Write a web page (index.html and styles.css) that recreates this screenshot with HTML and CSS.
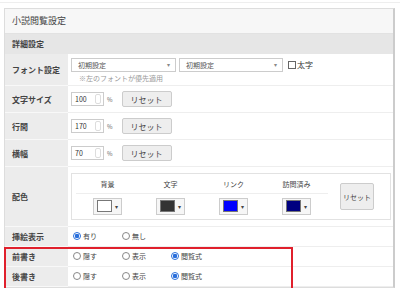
FILE: index.html
```html
<!DOCTYPE html>
<html lang="ja">
<head>
  <meta charset="UTF-8" />
  <title>小説閲覧設定</title>
  <link rel="stylesheet" href="styles.css">
</head>
<body>
  <div class="topline"></div>
  <div class="panel">
    <div class="panel-title">小説閲覧設定</div>
    <div class="section-title">詳細設定</div>
    <table class="settings">
      <tr class="row-font">
        <th>フォント設定</th>
        <td>
          <div class="font-line">
            <span class="select sel1">初期設定<i>▾</i></span>
            <span class="select sel2">初期設定<i>▾</i></span>
            <span class="check"><b></b>太字</span>
          </div>
          <div class="note">※左のフォントが優先適用</div>
        </td>
      </tr>
      <tr class="row-num">
        <th>文字サイズ</th>
        <td><span class="num">100<i></i></span><span class="unit">%</span><span class="btn">リセット</span></td>
      </tr>
      <tr class="row-num">
        <th>行間</th>
        <td><span class="num">170<i></i></span><span class="unit">%</span><span class="btn">リセット</span></td>
      </tr>
      <tr class="row-num">
        <th>横幅</th>
        <td><span class="num">70<i></i></span><span class="unit">%</span><span class="btn">リセット</span></td>
      </tr>
      <tr class="row-color">
        <th>配色</th>
        <td>
          <div class="colors">
            <div class="color-grid">
              <div class="ch">背景</div>
              <div class="ch">文字</div>
              <div class="ch">リンク</div>
              <div class="ch">訪問済み</div>
              <div class="cc"><span class="swatch"><b class="c-bg"></b><i>▾</i></span></div>
              <div class="cc"><span class="swatch"><b class="c-text"></b><i>▾</i></span></div>
              <div class="cc"><span class="swatch"><b class="c-link"></b><i>▾</i></span></div>
              <div class="cc"><span class="swatch"><b class="c-visited"></b><i>▾</i></span></div>
            </div>
            <span class="btn btn-tall">リセット</span>
          </div>
        </td>
      </tr>
      <tr class="row-radio">
        <th>挿絵表示</th>
        <td><span class="radio on">有り</span><span class="radio">無し</span></td>
      </tr>
      <tr class="row-radio mark">
        <th>前書き</th>
        <td><span class="radio">隠す</span><span class="radio">表示</span><span class="radio on">閲覧式</span></td>
      </tr>
      <tr class="row-radio mark">
        <th>後書き</th>
        <td><span class="radio">隠す</span><span class="radio">表示</span><span class="radio on">閲覧式</span></td>
      </tr>
    </table>
    <div class="highlight"></div>
  </div>
</body>
</html>
```
FILE: styles.css
```css
body {
  margin: 0;
  font-family: "Noto Sans CJK JP", "Noto Sans", sans-serif;
  font-size: 8px;
  color: #333;
  background: #fff;
  width: 400px;
  height: 288px;
  overflow: hidden;
}
.topline {
  height: 2px;
  border-bottom: 1px solid #eee;
  margin-bottom: 5px;
}
.panel {
  position: relative;
  margin-left: 4px;
  width: 388px;
  border: 1px solid #ddd;
  border-right: 2px solid #ccc;
}
.panel-title {
  height: 24px;
  line-height: 24px;
  padding-left: 7px;
  background: #f7f7f7;
  border-bottom: 1px solid #e2e2e2;
  font-size: 9px;
  color: #444;
}
.section-title {
  height: 20px;
  line-height: 20px;
  padding-left: 7px;
  background: #e6e6e6;
  font-weight: bold;
  color: #444;
}
.settings {
  width: 100%;
  border-collapse: collapse;
}
.settings th {
  width: 56px;
  padding: 0 0 0 7px;
  background: #ececec;
  text-align: left;
  font-weight: bold;
  color: #444;
  border-bottom: 1px solid #f8f8f8;
}
.settings td {
  padding: 0 0 0 3px;
  border-bottom: 1px solid #eee;
}
.row-font th, .row-font td { height: 31px; }
.row-num th, .row-num td { height: 26px; }
.row-color th, .row-color td { height: 59px; }
.row-radio th, .row-radio td { height: 19px; }

.font-line {
  display: flex;
  align-items: center;
  gap: 3px;
  margin-top: 1px;
}
.select {
  display: flex;
  align-items: center;
  justify-content: space-between;
  height: 12px;
  padding: 0 5px 0 6px;
  border: 1px solid #ccc;
  background: #fff;
  color: #555;
  font-size: 7px;
}
.select i { font-style: normal; color: #888; font-size: 6px; }
.sel1 { width: 92px; }
.sel2 { width: 91px; }
.check {
  display: flex;
  align-items: center;
  gap: 1px;
  margin-left: 2px;
}
.check b {
  width: 6px;
  height: 6px;
  border: 1px solid #666;
  background: #fff;
}
.note {
  margin: 1px 0 0 8px;
  color: #999;
  font-size: 7px;
}

.row-num td > span { vertical-align: middle; }
.num {
  display: inline-flex;
  align-items: center;
  justify-content: space-between;
  width: 26px;
  height: 12px;
  padding: 0 2px 0 3px;
  border: 1px solid #ccc;
  background: #fff;
  font-size: 7px;
  color: #333;
}
.num i {
  width: 4px;
  height: 8px;
  border: 1px solid #ddd;
  border-radius: 2px;
}
.unit {
  display: inline-block;
  margin-left: 3px;
  font-size: 6px;
  color: #666;
}
.btn {
  display: inline-flex;
  align-items: center;
  justify-content: center;
  width: 48px;
  height: 14px;
  margin-left: 9px;
  border: 1px solid #ccc;
  border-radius: 2px;
  background: #eee;
  color: #444;
  font-size: 8px;
}

.colors {
  display: flex;
  align-items: center;
  width: 318px;
  height: 45px;
  border: 1px solid #e2e2e2;
}
.color-grid {
  display: grid;
  grid-template-columns: repeat(4, 63px);
  grid-template-rows: 19px 24px;
  padding-left: 4px;
}
.ch {
  display: flex;
  align-items: center;
  justify-content: center;
  border-bottom: 1px solid #eee;
  color: #444;
  font-size: 7px;
}
.cc {
  display: flex;
  align-items: center;
  justify-content: center;
}
.swatch {
  display: flex;
  align-items: center;
  gap: 3px;
  height: 15px;
  padding: 0 3px 0 3px;
  border: 1px solid #ccc;
  background: #f6f6f6;
}
.swatch b {
  width: 13px;
  height: 10px;
  border: 1px solid #777;
}
.swatch i { font-style: normal; font-size: 6px; color: #444; }
.c-bg { background: #fff; }
.c-text { background: #333; }
.c-link { background: #0000ff; }
.c-visited { background: #000080; }
.btn-tall {
  width: 32px;
  height: 25px;
  margin-left: 12px;
  font-size: 7px;
}

.radio {
  display: inline-flex;
  align-items: center;
  gap: 2px;
  width: 47px;
  padding-left: 2px;
  font-size: 7px;
  color: #444;
}
.radio::before {
  content: "";
  width: 6px;
  height: 6px;
  border: 1px solid #888;
  border-radius: 50%;
  background: #fff;
}
.radio.on::before {
  border-color: #2a6fdb;
  background: radial-gradient(circle, #2a6fdb 0 2px, #fff 2.5px);
}
.highlight {
  position: absolute;
  left: -1px;
  top: 238px;
  width: 285px;
  height: 40px;
  border: 2px solid #e0202c;
}
```
